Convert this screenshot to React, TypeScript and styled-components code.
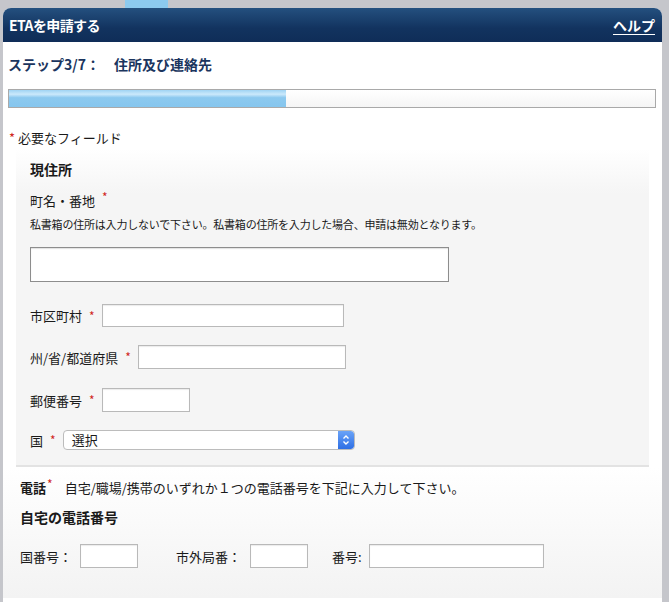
import React from "react";
import styled, { createGlobalStyle } from "styled-components";

const GlobalStyle = createGlobalStyle`
  html, body {
    margin: 0;
    padding: 0;
    background: #c5c6cb;
    font-family: "Noto Sans CJK JP", "Noto Sans", sans-serif;
    color: #1a1a1a;
  }
`;

const Page = styled.div`
  padding: 0 7px 0 3px;
  height: 602px;
  overflow: hidden;
`;

const TopStrip = styled.div`
  height: 8px;
`;

const Tab = styled.div`
  width: 43px;
  height: 8px;
  margin-left: 122px;
  background: #8ccaef;
`;

const Panel = styled.div`
  background: #fff;
  border-radius: 8px 8px 0 0;
  overflow: hidden;
  min-height: 594px;
`;

const Header = styled.div`
  height: 34px;
  padding: 0 7px 0 6px;
  display: flex;
  align-items: center;
  justify-content: space-between;
  background: linear-gradient(#24507f, #12335f 60%, #0f2d58);
  color: #fff;
`;

const HeaderTitle = styled.div`
  font-size: 14px;
  font-weight: 700;
  letter-spacing: -0.6px;
`;

const HelpLink = styled.a`
  font-size: 14px;
  font-weight: 700;
  color: #fff;
  text-decoration: underline;
  text-underline-offset: 3px;
`;

const Body = styled.div`
  padding: 12px 0 0 5px;
`;

const StepTitle = styled.div`
  font-size: 14px;
  font-weight: 700;
  line-height: 20px;
  color: #1b355e;
  span {
    margin-left: 14px;
  }
`;

const Progress = styled.div`
  margin: 15px 6px 0 0;
  height: 17px;
  border: 1px solid #a9a9a9;
  background: linear-gradient(#fff, #f5f5f5);
`;

const ProgressFill = styled.div`
  height: 100%;
  background: linear-gradient(#9fd3f3, #cbe9fb 25%, #8cc9ef 45%, #86c6ee);
`;

const RequiredNote = styled.div`
  margin-top: 20px;
  font-size: 13px;
  line-height: 20px;
`;

const NoteStar = styled.span`
  color: #d0271d;
  margin: 0 3px 0 1px;
`;

const Req = styled.span<{ $tight?: boolean }>`
  color: #d0271d;
  font-size: 12px;
  line-height: 0;
  vertical-align: 4px;
  margin: ${(p) => (p.$tight ? "0 12px 0 1px" : "0 7px 0 7px")};
`;

const Fieldset = styled.div`
  margin: 1px 13px 0 8px;
  padding: 10px 0 15px 14px;
  background: linear-gradient(#ffffff, #f5f5f5 45px, #f5f5f5);
  border-bottom: 2px solid #e3e3e3;
`;

const SectionTitle = styled.div`
  font-size: 14px;
  font-weight: 700;
  line-height: 20px;
`;

const FieldLabel = styled.div`
  margin-top: 12px;
  font-size: 13px;
  line-height: 20px;
`;

const Hint = styled.div`
  margin-top: 5px;
  font-size: 11px;
  line-height: 16px;
  letter-spacing: -0.2px;
`;

const TextBox = styled.div`
  margin-top: 15px;
  width: 417px;
  height: 33px;
  border: 1px solid #8d8d8d;
  background: #fff;
  box-shadow: inset 0 1px 1px rgba(0, 0, 0, 0.12);
`;

const Row = styled.div<{ $gap: number }>`
  display: flex;
  align-items: center;
  margin-top: ${(p) => p.$gap}px;
  font-size: 13px;
`;

const Input = styled.div<{ $w: number; $h?: number }>`
  width: ${(p) => p.$w - 2}px;
  height: ${(p) => (p.$h ?? 24) - 2}px;
  border: 1px solid #b9b9b9;
  background: #fff;
  box-shadow: inset 0 1px 1px rgba(0, 0, 0, 0.08);
`;

const Select = styled.div`
  width: 290px;
  height: 18px;
  display: flex;
  align-items: center;
  justify-content: space-between;
  border: 1px solid #bcbcbc;
  border-radius: 4px;
  background: #fff;
  overflow: hidden;
  font-size: 13px;
`;

const SelectText = styled.span`
  padding-left: 8px;
  line-height: 18px;
`;

const Stepper = styled.div`
  width: 16px;
  height: 18px;
  display: flex;
  align-items: center;
  justify-content: center;
  background: linear-gradient(#6aa3f8, #2f6fe4);
  border-radius: 0 3px 3px 0;
`;

const PhoneSection = styled.div`
  padding: 11px 0 0 17px;
  background: linear-gradient(#ffffff, #f3f3f3 130px);
  min-height: 120px;
`;

const PhoneIntro = styled.div`
  font-size: 13px;
  line-height: 20px;
  b {
    font-weight: 700;
  }
`;

const PhoneTitle = styled.div`
  margin-top: 9px;
  font-size: 14px;
  font-weight: 700;
  line-height: 20px;
`;

const PhoneRow = styled.div`
  display: flex;
  align-items: center;
  margin-top: 17px;
  font-size: 13px;
`;

const PhoneLabel = styled.span<{ $w: number }>`
  width: ${(p) => p.$w}px;
`;

const Spacer = styled.span<{ $w: number }>`
  width: ${(p) => p.$w}px;
`;

export default function App() {
  return (
    <>
      <GlobalStyle />
      <Page>
        <TopStrip>
          <Tab />
        </TopStrip>
        <Panel>
          <Header>
            <HeaderTitle>ETAを申請する</HeaderTitle>
            <HelpLink>ヘルプ</HelpLink>
          </Header>
          <Body>
            <StepTitle>
              ステップ3/7：<span>住所及び連絡先</span>
            </StepTitle>
            <Progress>
              <ProgressFill style={{ width: `${(3 / 7) * 100}%` }} />
            </Progress>
            <RequiredNote>
              <NoteStar>*</NoteStar>必要なフィールド
            </RequiredNote>
            <Fieldset>
              <SectionTitle>現住所</SectionTitle>
              <FieldLabel>
                町名・番地
                <Req>*</Req>
              </FieldLabel>
              <Hint>私書箱の住所は入力しないで下さい。私書箱の住所を入力した場合、申請は無効となります。</Hint>
              <TextBox />
              <Row $gap={22}>
                市区町村<Req>*</Req>
                <Input $w={242} $h={23} />
              </Row>
              <Row $gap={18}>
                州/省/都道府県<Req>*</Req>
                <Input $w={208} />
              </Row>
              <Row $gap={19}>
                郵便番号<Req>*</Req>
                <Input $w={88} />
              </Row>
              <Row $gap={18}>
                国<Req>*</Req>
                <Select>
                  <SelectText>選択</SelectText>
                  <Stepper>
                    <svg width="8" height="12" viewBox="0 0 8 12" fill="none">
                      <path d="M1.5 4.5 L4 2 L6.5 4.5" stroke="#fff" strokeWidth="1.4" />
                      <path d="M1.5 7.5 L4 10 L6.5 7.5" stroke="#fff" strokeWidth="1.4" />
                    </svg>
                  </Stepper>
                </Select>
              </Row>
            </Fieldset>
          </Body>
          <PhoneSection>
            <PhoneIntro>
              <b>電話</b>
              <Req $tight>*</Req>
              自宅/職場/携帯のいずれか１つの電話番号を下記に入力して下さい。
            </PhoneIntro>
            <PhoneTitle>自宅の電話番号</PhoneTitle>
            <PhoneRow>
              <PhoneLabel $w={60}>国番号：</PhoneLabel>
              <Input $w={58} />
              <Spacer $w={38} />
              <PhoneLabel $w={74}>市外局番：</PhoneLabel>
              <Input $w={58} />
              <Spacer $w={24} />
              <PhoneLabel $w={37}>番号:</PhoneLabel>
              <Input $w={175} />
            </PhoneRow>
          </PhoneSection>
        </Panel>
      </Page>
    </>
  );
}
